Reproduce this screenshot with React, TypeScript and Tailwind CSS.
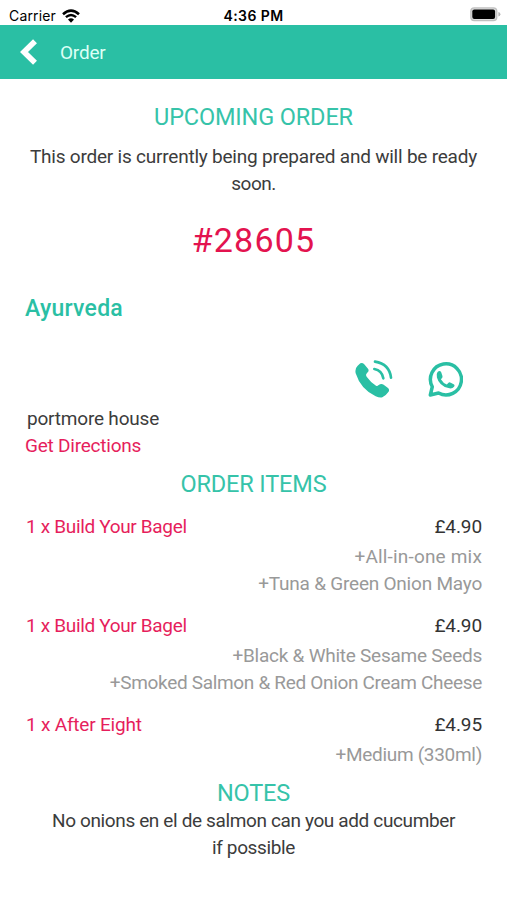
import { type ReactNode } from "react";

interface OrderItem {
  quantity: number;
  name: string;
  price: string;
  extras: { label: string; tracking: string }[];
  tracking: string;
}

const items: OrderItem[] = [
  {
    quantity: 1,
    name: "Build Your Bagel",
    price: "£4.90",
    tracking: "tracking-[-0.33px]",
    extras: [
      { label: "All-in-one mix", tracking: "tracking-[0.18px]" },
      { label: "Tuna & Green Onion Mayo", tracking: "tracking-[-0.22px]" },
    ],
  },
  {
    quantity: 1,
    name: "Build Your Bagel",
    price: "£4.90",
    tracking: "tracking-[-0.33px]",
    extras: [
      { label: "Black & White Sesame Seeds", tracking: "tracking-[-0.25px]" },
      {
        label: "Smoked Salmon & Red Onion Cream Cheese",
        tracking: "tracking-[-0.32px]",
      },
    ],
  },
  {
    quantity: 1,
    name: "After Eight",
    price: "£4.95",
    tracking: "tracking-[-0.2px]",
    extras: [{ label: "Medium (330ml)", tracking: "tracking-[-0.3px]" }],
  },
];

function WifiIcon() {
  return (
    <svg viewBox="0 0 18 14" className="h-[14px] w-[18px]" fill="none">
      <path d="M1 5.2 Q9 -2 17 5.2" stroke="#000" strokeWidth="2.6" />
      <path d="M3.9 8.2 Q9 3.7 14.1 8.2" stroke="#000" strokeWidth="2.4" />
      <path d="M6 10.6 Q9 8 12 10.6 L9 13.7 Z" fill="#000" />
    </svg>
  );
}

function BatteryIcon() {
  return (
    <svg viewBox="0 0 31 15" className="h-[15px] w-[31px]">
      <rect x="0.2" y="0.3" width="27.2" height="14" rx="4" fill="#c0c0c0" />
      <rect x="1.5" y="1.6" width="24.6" height="11.4" rx="3" fill="#dcdcdc" />
      <rect x="2.3" y="2.6" width="22.8" height="9.4" rx="2" fill="#000" />
      <path d="M28.4 5 Q30.4 5.6 30.4 7.3 T28.4 9.6 Z" fill="#b5b5b5" />
    </svg>
  );
}

function PhoneIcon() {
  return (
    <svg viewBox="0 0 114 114" className="size-[38px]" fill="none">
      <path
        d="M8 17 L16 10 Q22 7 27 12 L39 26 Q43 32 38 37 L34 42 Q32 46 35 50 Q47 67 63 77 Q67 79 70 76 L75 73 Q80 70 86 74 L99 84 Q105 90 100 96 Q91 109 82 112 Q74 114 62 109 Q17 88 2 40 Q-1 25 8 17 Z"
        fill="#2abfa4"
      />
      <path
        d="M58 27 Q81 31 85 55 M60 5 Q103 12 108 53"
        stroke="#2abfa4"
        strokeWidth="8"
        strokeLinecap="round"
      />
    </svg>
  );
}

function WhatsAppIcon() {
  return (
    <svg viewBox="0 0 106 110" className="h-[37px] w-[35px]" fill="none">
      <path
        d="M7 102 L13 77 A47 47 0 1 1 32 96 Z"
        stroke="#2abfa4"
        strokeWidth="10.5"
        strokeLinejoin="round"
      />
      <path
        d="M29 32 Q36 26 40 33 L44 45 Q45 49 39 54 Q46 66 57 70 L62 65 Q65 62 69 65 L79 70 Q82 73 79 77 Q73 84 62 81 Q34 75 27 49 Q24 38 29 32 Z"
        fill="#2abfa4"
      />
    </svg>
  );
}

function SectionTitle({ children }: { children: ReactNode }) {
  return (
    <h2 className="text-center text-[23.5px] leading-[30px] font-normal tracking-[-0.15px] text-[#36c3a9]">
      {children}
    </h2>
  );
}

function StatusBar() {
  return (
    <div className="grid h-[25px] grid-cols-3 items-center pr-[6px] pl-[9px] font-['Inter',sans-serif] text-[14px] text-black">
      <div className="flex items-center gap-[6px] pt-[2px]">
        <span className="tracking-[0.15px]">Carrier</span>
        <WifiIcon />
      </div>
      <span className="pt-[2px] pr-[3px] text-center font-semibold tracking-[0.4px]">
        4:36 PM
      </span>
      <div className="flex justify-end">
        <BatteryIcon />
      </div>
    </div>
  );
}

function Header() {
  return (
    <header className="flex h-[54px] items-center bg-[#2abfa4] pl-[20px]">
      <svg viewBox="0 0 17 26" className="h-[26px] w-[17px]" fill="none">
        <path d="M15 2.3 L4 13 L15 23.7" stroke="#fff" strokeWidth="5.6" />
      </svg>
      <span className="pt-px pl-[23px] text-[19px] leading-[27px] tracking-[-0.2px] text-[#dcfff6]">
        Order
      </span>
    </header>
  );
}

function Item({ item }: { item: OrderItem }) {
  return (
    <li className="pb-[15px]">
      <div className="flex justify-between pb-[3px]">
        <span className={`pl-px text-[#e61e5c] ${item.tracking}`}>
          {item.quantity} x {item.name}
        </span>
        <span className="tracking-[-0.1px] text-[#333]">{item.price}</span>
      </div>
      {item.extras.map((extra) => (
        <p
          key={extra.label}
          className={`text-right text-[#999] ${extra.tracking}`}
        >
          +{extra.label}
        </p>
      ))}
    </li>
  );
}

export default function App() {
  return (
    <div className="h-[900px] w-[507px] overflow-hidden bg-white font-['Roboto',sans-serif] text-[19px] leading-[27px] text-[#3c3c3c]">
      <StatusBar />
      <Header />
      <main className="px-[25px] pt-[23px]">
        <SectionTitle>UPCOMING ORDER</SectionTitle>
        <p className="pt-[11px] text-center">
          <span className="tracking-[-0.22px]">
            This order is currently being prepared and will be ready
          </span>
          <br />
          <span className="tracking-[-0.5px]">soon.</span>
        </p>
        <p className="pt-[23px] text-center text-[34px] leading-[40px] tracking-[1.2px] text-[#e3134f]">
          #28605
        </p>

        <h3 className="pt-[34px] text-[23px] leading-[30px] font-medium tracking-[0.25px] text-[#2abfa4]">
          Ayurveda
        </h3>
        <div className="flex items-center justify-end gap-[35px] pt-[36px] pr-[19px]">
          <PhoneIcon />
          <WhatsAppIcon />
        </div>
        <p className="pt-[7px] pl-[2px] tracking-[-0.2px]">portmore house</p>
        <p className="tracking-[-0.22px] text-[#e61e5c]">Get Directions</p>

        <div className="pt-[10px]">
          <SectionTitle>ORDER ITEMS</SectionTitle>
        </div>
        <ul className="pt-[14px]">
          {items.map((item, index) => (
            <Item key={index} item={item} />
          ))}
        </ul>

        <div className="-mt-[5px]">
          <SectionTitle>NOTES</SectionTitle>
        </div>
        <p className="-mt-px text-center tracking-[-0.37px]">
          No onions en el de salmon can you add cucumber
          <br />
          if possible
        </p>
      </main>
    </div>
  );
}
